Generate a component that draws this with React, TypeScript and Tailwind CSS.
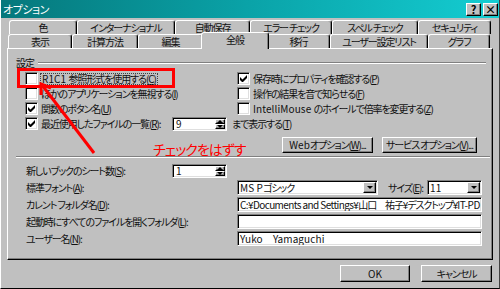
import React from 'react';

const raised =
  'bg-[#c0c0c0] border border-t-white border-l-white border-r-black border-b-black shadow-[inset_-1px_-1px_0_#808080]';
const sunken =
  'bg-white border border-t-[#808080] border-l-[#808080] border-r-white border-b-white shadow-[inset_1px_1px_0_#000,inset_-1px_-1px_0_#dfdfdf]';
const jp = "[font-family:'Noto_Sans_CJK_JP',sans-serif] [font-feature-settings:'palt']";

// Latin runs keep normal spacing; Japanese runs are squeezed to MS PGothic widths
function L({ children }: { children: React.ReactNode }) {
  return <span className="tracking-[0.1px]">{children}</span>;
}

function Check({ on = false }: { on?: boolean }) {
  return (
    <div className={`${sunken} w-[13px] h-[13px] shrink-0 flex items-center justify-center`}>
      {on && (
        <svg width="7" height="7" viewBox="0 0 7 7">
          <path d="M0 2v3l2 2h1l4-4V0L2.5 4.5z" fill="#000" />
        </svg>
      )}
    </div>
  );
}

function Tab({ label, className = '' }: { label: string; className?: string }) {
  return (
    <div
      className={`h-[14px] shrink-0 flex items-center justify-center border-l border-t border-t-white border-l-white border-r border-r-black shadow-[inset_-1px_0_0_#808080] rounded-t-[3px] whitespace-nowrap ${className}`}
    >
      {label}
    </div>
  );
}

function Spin({ value, className = '' }: { value: string; className?: string }) {
  return (
    <div className={`${sunken} h-[14px] shrink-0 flex items-center justify-between ${className}`}>
      <span className="pl-[3px]">{value}</span>
      <div className="flex flex-col w-[11px] h-full py-[1px] pr-[1px]">
        <div className={`${raised} flex-1 flex items-center justify-center`}>
          <div className="w-0 h-0 border-x-[3px] border-x-transparent border-b-[3px] border-b-black" />
        </div>
        <div className={`${raised} flex-1 flex items-center justify-center`}>
          <div className="w-0 h-0 border-x-[3px] border-x-transparent border-t-[3px] border-t-black" />
        </div>
      </div>
    </div>
  );
}

function Combo({ children, className = '' }: { children: React.ReactNode; className?: string }) {
  return (
    <div className={`${sunken} h-[15px] shrink-0 flex items-center justify-between ${className}`}>
      <span className="pl-[2px]">{children}</span>
      <div className={`${raised} w-[13px] h-[11px] mr-[1px] flex items-center justify-center`}>
        <div className="w-0 h-0 border-x-[3px] border-x-transparent border-t-[3px] border-t-black" />
      </div>
    </div>
  );
}

function Field({ children }: { children?: React.ReactNode }) {
  return (
    <div className={`${sunken} w-[245px] h-[15px] shrink-0 flex items-center overflow-hidden whitespace-nowrap`}>
      <span className="pl-[2px]">{children}</span>
    </div>
  );
}

export default function App() {
  return (
    <div
      className={`relative w-[500px] h-[289px] bg-[#c0c0c0] overflow-hidden text-[#111] text-[10px] leading-none tracking-[-1.1px] whitespace-nowrap border-l border-l-white border-r border-r-[#404040] border-b border-b-black ${jp}`}
    >
      {/* Title bar */}
      <div className="h-[18px] flex items-center justify-between bg-gradient-to-r from-[#06787c] via-[#0aa3a8] to-[#14cdd2]">
        <span className="pl-[2px] text-white text-[11px] tracking-[-0.5px]">オプション</span>
        <div className="flex gap-[2px] pr-[1px] tracking-normal text-black">
          <div className={`${raised} w-[15px] h-[13px] flex items-center justify-center text-[11px] font-bold`}>?</div>
          <div className={`${raised} w-[15px] h-[13px] flex items-center justify-center text-[11px] font-bold`}>×</div>
        </div>
      </div>

      {/* Tabs */}
      <div className="mt-[2px] flex pl-[8px]">
        <Tab label="色" className="w-[68px]" />
        <Tab label="インターナショナル" className="w-[98px]" />
        <Tab label="自動保存" className="w-[75px]" />
        <Tab label="エラー チェック" className="w-[82px]" />
        <Tab label="スペル チェック" className="w-[86px]" />
        <Tab label="セキュリティ" className="w-[73px]" />
      </div>
      <div className="flex pl-[7px] h-[14px] items-start">
        <Tab label="表示" className="w-[64px]" />
        <Tab label="計算方法" className="w-[66px]" />
        <Tab label="編集" className="w-[65px]" />
        <Tab label="全般" className="relative z-10 w-[68px] -mx-[2px] -mt-[2px] !h-[17px] bg-[#c0c0c0] pb-[2px]" />
        <Tab label="移行" className="w-[63px]" />
        <Tab label="ユーザー設定リスト" className="w-[98px]" />
        <Tab label="グラフ" className="w-[62px]" />
      </div>

      {/* Panel */}
      <div className={`${raised} ml-[6px] w-[486px] h-[212px]`}>
        <div className="pt-[7px] pl-[8px] pr-[2px] flex flex-col">
          <div className="h-[13px] flex items-center">
            <span>設定</span>
            <div className="flex-1 ml-[4px] mr-[4px] border-t border-t-[#808080] border-b border-b-white" />
          </div>

          <div className="mt-[2px] flex flex-col">
            <div className="h-[15px] flex items-center">
              <div className="w-[221px] pl-[9px] flex items-center gap-[3px]">
                <Check />
                <span className="outline outline-1 outline-dotted outline-[#404040] px-[1px]">
                  <L>R1C1 </L>参照形式を使用する(<u>C</u>)
                </span>
              </div>
              <div className="flex items-center gap-[3px]">
                <Check on />
                <span>保存時にプロパティを確認する(<u>P</u>)</span>
              </div>
            </div>
            <div className="h-[15px] flex items-center">
              <div className="w-[221px] pl-[9px] flex items-center gap-[3px]">
                <Check />
                <span>ほかのアプリケーションを無視する(<u>I</u>)</span>
              </div>
              <div className="flex items-center gap-[3px]">
                <Check />
                <span>操作の結果を音で知らせる(<u>F</u>)</span>
              </div>
            </div>
            <div className="h-[15px] flex items-center">
              <div className="w-[221px] pl-[9px] flex items-center gap-[3px]">
                <Check on />
                <span>関数のポタン名(<u>U</u>)</span>
              </div>
              <div className="flex items-center gap-[3px]">
                <Check />
                <span>
                  <L>IntelliMouse </L>のホイールで倍率を変更する(<u>Z</u>)
                </span>
              </div>
            </div>
            <div className="h-[15px] flex items-center">
              <div className="w-[156px] pl-[9px] flex items-center gap-[3px]">
                <Check on />
                <span>最近使用したファイルの一覧(<u>R</u>):</span>
              </div>
              <Spin value="9" className="w-[55px]" />
              <span className="ml-[5px]">まで表示する(<u>T</u>)</span>
            </div>
          </div>

          <div className="mt-[6px] h-[16px] flex pl-[266px] gap-[9px]">
            <div className={`${raised} w-[91px] flex items-center justify-center`}>
              <L>Web </L>オプション(<u>W</u>)...
            </div>
            <div className={`${raised} w-[95px] flex items-center justify-center`}>
              サービス オプション(<u>V</u>)...
            </div>
          </div>

          <div className="mt-[3px] border-t border-t-[#808080] border-b border-b-white" />

          <div className="mt-[4px] flex flex-col">
            <div className="h-[17px] flex items-center">
              <span className="w-[156px] pl-[10px]">新しいブックのシート数(<u>S</u>):</span>
              <Spin value="1" className="w-[55px]" />
            </div>
            <div className="h-[17px] flex items-center">
              <span className="w-[221px] pl-[10px]">標準フォント(<u>A</u>):</span>
              <Combo className="w-[141px]">
                <L>MS P</L>ゴシック
              </Combo>
              <span className="ml-[10px] w-[39px]">サイズ(<u>E</u>):</span>
              <Combo className="w-[55px]">
                <L>11</L>
              </Combo>
            </div>
            <div className="h-[17px] flex items-center">
              <span className="w-[221px] pl-[10px]">カレント フォルダ名(<u>D</u>):</span>
              <Field>
                <span className="tracking-[-0.6px]">C:¥Documents and Settings¥</span>山口　祐子¥デスクトップ¥
                <span className="tracking-[-0.4px]">IT-PD</span>
              </Field>
            </div>
            <div className="h-[17px] flex items-center">
              <span className="w-[221px] pl-[10px]">起動時にすべてのファイルを開くフォルダ(<u>L</u>):</span>
              <Field />
            </div>
            <div className="h-[17px] flex items-center">
              <span className="w-[221px] pl-[10px]">ユーザー名(<u>N</u>):</span>
              <Field>
                <L>Yuko　Yamaguchi</L>
              </Field>
            </div>
          </div>
        </div>
      </div>

      {/* Dialog buttons */}
      <div className="mt-[5px] flex justify-end gap-[11px] pr-[7px]">
        <div className={`${raised} w-[70px] h-[17px] flex items-center justify-center`}>
          <L>OK</L>
        </div>
        <div className={`${raised} w-[71px] h-[17px] flex items-center justify-center`}>キャンセル</div>
      </div>

      {/* Annotation overlay */}
      <div className="absolute left-[16px] top-[68px] w-[158px] h-[20px] border-[3px] border-[#ff0000] pointer-events-none" />
      <div className="absolute left-[152px] top-[142px] text-[14px] tracking-[-1px] text-[#ff0000] pointer-events-none">
        チェックをはずす
      </div>
      <svg className="absolute left-0 top-0 pointer-events-none" width="500" height="289" viewBox="0 0 500 289">
        <line x1="93" y1="153" x2="41" y2="85" stroke="#ff0000" strokeWidth="3" />
        <polyline points="40,95 40,84 50,88" fill="none" stroke="#ff0000" strokeWidth="3" />
      </svg>
    </div>
  );
}
